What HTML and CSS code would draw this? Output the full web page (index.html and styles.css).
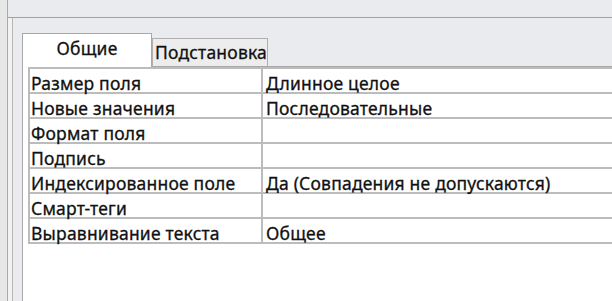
FILE: index.html
```html
<!DOCTYPE html>
<html lang="ru">
<head>
<meta charset="utf-8">
<title>Свойства поля</title>
<link rel="stylesheet" href="styles.css">
</head>
<body>
<div class="window">
  <div class="edge"></div>
  <div class="main">
    <div class="topbar"></div>
    <div class="content">
      <div class="inner">
        <div class="panel">
          <div class="tabs">
            <div class="tab active">Общие</div>
            <div class="tab">Подстановка</div>
            <div class="tabs-fill"></div>
          </div>
          <div class="panel-body">
            <div class="props">
              <div class="row"><div class="cell name">Размер поля</div><div class="cell value">Длинное целое</div></div>
              <div class="row"><div class="cell name">Новые значения</div><div class="cell value">Последовательные</div></div>
              <div class="row"><div class="cell name">Формат поля</div><div class="cell value"></div></div>
              <div class="row"><div class="cell name">Подпись</div><div class="cell value"></div></div>
              <div class="row"><div class="cell name">Индексированное поле</div><div class="cell value">Да (Совпадения не допускаются)</div></div>
              <div class="row"><div class="cell name">Смарт-теги</div><div class="cell value"></div></div>
              <div class="row"><div class="cell name">Выравнивание текста</div><div class="cell value">Общее</div></div>
            </div>
          </div>
        </div>
      </div>
    </div>
  </div>
</div>
</body>
</html>
```

FILE: styles.css
```css
* { box-sizing: border-box; }
html, body {
  margin: 0;
  padding: 0;
  width: 612px;
  height: 301px;
  overflow: hidden;
  background: #e9ebee;
}
body {
  font-family: "Noto Sans", "Open Sans", sans-serif;
  font-size: 17.5px;
  letter-spacing: 0.2px;
  color: #111111;
  -webkit-text-stroke: 0.3px #111111;
}
.window {
  display: flex;
  height: 301px;
}
.edge {
  width: 8px;
  background: #e7e7e7;
  border-right: 1px solid #a9a9a9;
}
.main {
  flex: 1;
  display: flex;
  flex-direction: column;
  min-width: 0;
}
.topbar {
  height: 18px;
  background: #e9ebee;
  border-bottom: 1px solid #a0a0a0;
  box-shadow: 0 1px 0 #c8cacd;
}
.content {
  flex: 1;
  display: flex;
  padding-left: 4px;
  background: #f2f2f2;
}
.inner {
  flex: 1;
  display: flex;
  border-left: 1px solid #b6b6b6;
  padding-left: 9px;
  padding-top: 15px;
  background: #e9ebee;
  min-width: 0;
}
.panel {
  flex: 1;
  display: flex;
  flex-direction: column;
  min-width: 0;
}
.tabs {
  display: flex;
  align-items: flex-end;
  height: 34px;
}
.tab {
  height: 29px;
  padding: 0 2px;
  line-height: 27px;
  border: 1px solid #b0b0b0;
  background: #ededed;
  width: 116px;
  text-align: center;
  border-bottom: 1px solid #a8a8a8;
}
.tab.active {
  height: 34px;
  width: 130px;
  line-height: 29px;
  background: #ffffff;
  border-color: #a8a8a8;
  border-bottom: none;
}
.tabs-fill {
  flex: 1;
  border-bottom: 1px solid #a8a8a8;
}
.panel-body {
  flex: 1;
  background: #ffffff;
  border-left: 1px solid #a8a8a8;
  padding-left: 5px;
}
.props {
  border-top: 2px solid #bcbcbc;
  border-left: 2px solid #bcbcbc;
}
.row {
  display: grid;
  grid-template-columns: 233px 1fr;
  height: 25px;
  border-bottom: 2px solid #bcbcbc;
}
.cell {
  height: 23px;
  padding: 3px 0 0 1px;
  line-height: 23px;
  white-space: nowrap;
  overflow: visible;
}
.name {
  border-right: 2px solid #bcbcbc;
}
.value {
  padding-left: 3px;
}
```
